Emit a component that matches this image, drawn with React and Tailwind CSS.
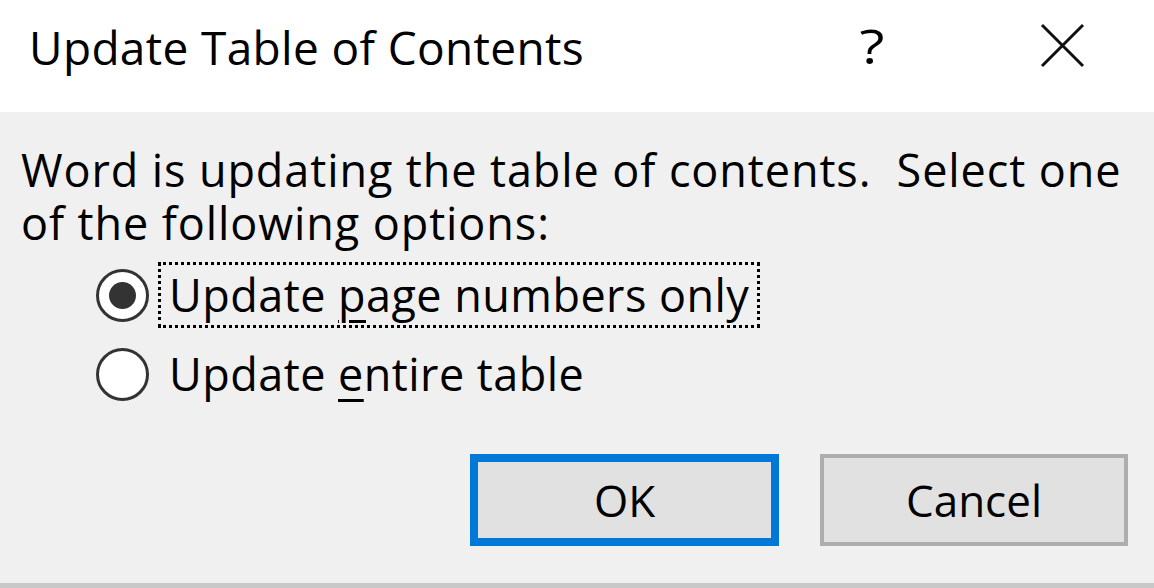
const font = { fontFamily: '"Open Sans", "Noto Sans", sans-serif' };

const Radio = ({ checked }) => (
  <div className="w-[53px] h-[53px] rounded-full border-[3px] border-[#333] bg-white flex items-center justify-center shrink-0">
    {checked && <div className="w-[27px] h-[27px] rounded-full bg-[#333]" />}
  </div>
);

export default function App() {
  return (
    <div
      className="w-[1154px] h-[588px] flex flex-col text-black overflow-hidden"
      style={font}
    >
      {/* title bar */}
      <div className="h-[112px] bg-white flex items-start shrink-0">
        <div className="pl-[29px] pt-[16px] text-[46px] leading-[62px] tracking-[0.35px] flex-1">
          Update Table of Contents
        </div>
        <div className="pt-[15px] text-[48px] leading-[62px] w-[26px] mr-[152px] scale-x-[1.2]">?</div>
        <svg className="mt-[23px] mr-[69px]" width="45" height="45" viewBox="0 0 45 45">
          <path d="M2 2 L43 43 M43 2 L2 43" stroke="#111" strokeWidth="3" fill="none" />
        </svg>
      </div>

      {/* body */}
      <div className="flex-1 bg-[#f0f0f0] flex flex-col">
        <p className="pl-[21px] pt-[31px] text-[45px] leading-[53px] tracking-[0.9px] whitespace-pre">
          {"Word is updating the table of contents.  Select one\nof the following options:"}
        </p>

        <div className="flex flex-col gap-[13px] pl-[96px] mt-[13px] text-[45px] tracking-[0.45px]">
          <div className="flex items-center h-[66px]">
            <Radio checked />
            <div className="ml-[9px] h-[66px] border-[3px] border-dotted border-black flex items-center pl-[8px] pr-[8px]">
              <span>
                Update <span className="underline underline-offset-[8px] decoration-[3px]">p</span>age numbers only
              </span>
            </div>
          </div>
          <div className="flex items-center h-[66px]">
            <Radio />
            <div className="ml-[20px]">
              Update <span className="underline underline-offset-[8px] decoration-[3px]">e</span>ntire table
            </div>
          </div>
        </div>

        <div className="flex justify-end gap-[41px] pr-[26px] mt-auto mb-[37px]">
          <button className="w-[309px] h-[92px] bg-[#e1e1e1] border-[8px] border-[#0078d7] text-[44px] flex items-center justify-center">
            OK
          </button>
          <button className="w-[308px] h-[92px] bg-[#e1e1e1] border-[4px] border-[#adadad] text-[44px] flex items-center justify-center">
            Cancel
          </button>
        </div>
      </div>
      <div className="h-[5px] bg-[#c8c8c8] shrink-0" />
    </div>
  );
}
